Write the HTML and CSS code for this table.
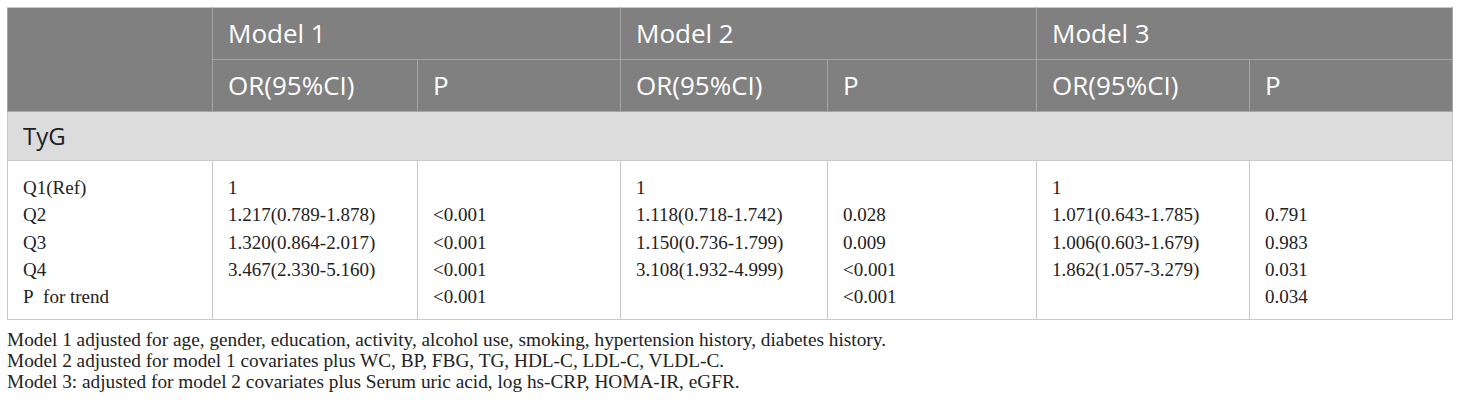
FILE: index.html
```html
<!DOCTYPE html>
<html lang="en">
<head>
<meta charset="utf-8">
<title>TyG table</title>
<link rel="stylesheet" href="styles.css">
</head>
<body>
<div class="page">
  <table class="data">
    <colgroup>
      <col class="c0"><col class="c1"><col class="c2"><col class="c3"><col class="c4"><col class="c5"><col class="c6">
    </colgroup>
    <thead>
      <tr class="h1">
        <th rowspan="2"></th>
        <th colspan="2">Model 1</th>
        <th colspan="2">Model 2</th>
        <th colspan="2">Model 3</th>
      </tr>
      <tr class="h2">
        <th>OR(95%CI)</th>
        <th>P</th>
        <th>OR(95%CI)</th>
        <th>P</th>
        <th>OR(95%CI)</th>
        <th>P</th>
      </tr>
    </thead>
    <tbody>
      <tr class="group">
        <td colspan="7">TyG</td>
      </tr>
      <tr class="body">
        <td><div>Q1(Ref)</div><div>Q2</div><div>Q3</div><div>Q4</div><div>P&nbsp; for trend</div></td>
        <td><div>1</div><div>1.217(0.789-1.878)</div><div>1.320(0.864-2.017)</div><div>3.467(2.330-5.160)</div><div>&nbsp;</div></td>
        <td><div>&nbsp;</div><div>&lt;0.001</div><div>&lt;0.001</div><div>&lt;0.001</div><div>&lt;0.001</div></td>
        <td><div>1</div><div>1.118(0.718-1.742)</div><div>1.150(0.736-1.799)</div><div>3.108(1.932-4.999)</div><div>&nbsp;</div></td>
        <td><div>&nbsp;</div><div>0.028</div><div>0.009</div><div>&lt;0.001</div><div>&lt;0.001</div></td>
        <td><div>1</div><div>1.071(0.643-1.785)</div><div>1.006(0.603-1.679)</div><div>1.862(1.057-3.279)</div><div>&nbsp;</div></td>
        <td><div>&nbsp;</div><div>0.791</div><div>0.983</div><div>0.031</div><div>0.034</div></td>
      </tr>
    </tbody>
  </table>
  <div class="notes">
    <p>Model 1 adjusted for age, gender, education, activity, alcohol use, smoking, hypertension history, diabetes history.</p>
    <p>Model 2 adjusted for model 1 covariates plus WC, BP, FBG, TG, HDL-C, LDL-C, VLDL-C.</p>
    <p>Model 3: adjusted for model 2 covariates plus Serum uric acid, log hs-CRP, HOMA-IR, eGFR.</p>
  </div>
</div>
</body>
</html>
```

FILE: styles.css
```css
html, body {
  margin: 0;
  padding: 0;
  background: #ffffff;
}

.page {
  padding: 7px;
}

.data {
  border-collapse: collapse;
  table-layout: fixed;
  width: 1446px;
}

.c0 { width: 205px; }
.c1 { width: 205px; }
.c2 { width: 203px; }
.c3 { width: 207px; }
.c4 { width: 209px; }
.c5 { width: 213px; }
.c6 { width: 203px; }

.data th {
  background: #808080;
  color: #ffffff;
  font-family: "Open Sans", Lato, sans-serif;
  font-weight: 400;
  font-size: 26px;
  line-height: 30px;
  text-align: left;
  padding: 0 15px 1px;
  height: 50px;
  border: 1px solid #a6a6a6;
  vertical-align: middle;
}

.data thead tr.h1 th {
  border-top-color: #c8c8c8;
}

.group td {
  background: #dcdcdc;
  color: #222222;
  font-family: "Open Sans", Lato, sans-serif;
  font-size: 24px;
  line-height: 30px;
  height: 47px;
  padding: 0 15px 1px;
  border: 1px solid #c8c8c8;
  vertical-align: middle;
}

.body td {
  font-family: "Liberation Serif", "Times New Roman", serif;
  font-size: 19px;
  color: #222222;
  line-height: 27.3px;
  padding: 13px 15px 9px;
  border: 1px solid #c8c8c8;
  vertical-align: top;
  white-space: nowrap;
}

.notes {
  margin-top: 9px;
  font-family: "Liberation Serif", "Times New Roman", serif;
  font-size: 19.3px;
  color: #222222;
}

.notes p {
  margin: 0;
  line-height: 21px;
}
```
